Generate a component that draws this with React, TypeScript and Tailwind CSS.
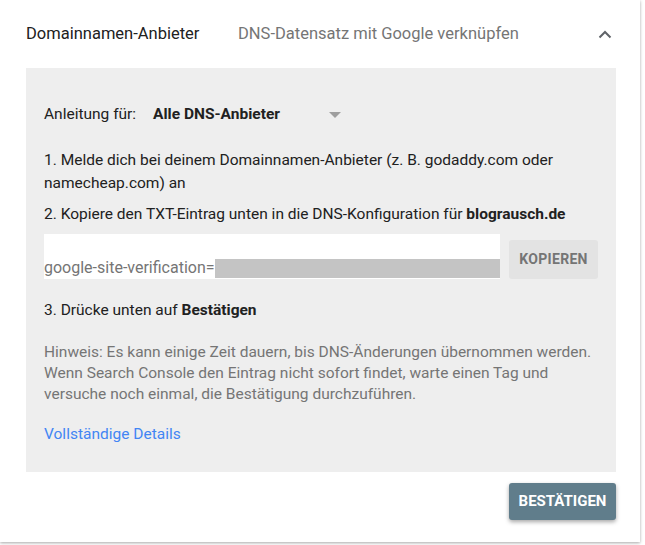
import React from "react";

export default function App() {
  return (
    <div className="w-[645px] h-[545px] bg-white" style={{ fontFamily: "Roboto, 'Liberation Sans', sans-serif" }}>
      <div className="w-[640px] h-[542px] bg-white shadow-[0_1px_3px_rgba(0,0,0,0.35)] flex flex-col">
        <div className="h-[68px] flex items-center pl-[26px] pr-[30px]">
          <div className="w-[212px] text-[16.5px] text-[#212121]">Domainnamen-Anbieter</div>
          <div className="flex-1 text-[16.5px] text-[#757575]">DNS-Datensatz mit Google verknüpfen</div>
          <svg width="14" height="9" viewBox="0 0 14 9" className="mr-[-2px]">
            <path d="M1.5 7.5 L7 2 L12.5 7.5" fill="none" stroke="#5f6368" strokeWidth="2" />
          </svg>
        </div>
        <div className="mx-[26px] w-[590px] h-[404px] bg-[#eeeeee] px-[18px] pt-[35px] text-[15.5px] text-[#212121]">
          <div className="flex items-center h-[24px]">
            <span>Anleitung für:</span>
            <span className="ml-[17px] font-bold w-[170px]">Alle DNS-Anbieter</span>
            <svg width="12" height="6" viewBox="0 0 12 6" className="ml-[6px]">
              <path d="M0 0 L12 0 L6 6 Z" fill="#9e9e9e" />
            </svg>
          </div>
          <div className="mt-[22px] leading-[23px]">
            1. Melde dich bei deinem Domainnamen-Anbieter (z. B. godaddy.com oder namecheap.com) an
          </div>
          <div className="mt-[8px] leading-[23px]">
            2. Kopiere den TXT-Eintrag unten in die DNS-Konfiguration für <b>blograusch.de</b>
          </div>
          <div className="mt-[8px] flex items-end">
            <div className="w-[457px] h-[45px] bg-white flex items-end">
              <span className="text-[#757575] text-[16px] leading-[20px] mb-[1px]">google-site-verification=</span>
              <div className="flex-1 h-[19px] bg-[#c4c4c4] mb-[1px]"></div>
            </div>
            <button className="ml-[9px] w-[89px] h-[39px] rounded-[3px] bg-[#e3e3e3] text-[#757575] text-[14px] font-bold tracking-[0.3px]">
              KOPIEREN
            </button>
          </div>
          <div className="mt-[20px] leading-[23px]">
            3. Drücke unten auf <b>Bestätigen</b>
          </div>
          <div className="mt-[20px] leading-[21px] text-[#757575]">
            Hinweis: Es kann einige Zeit dauern, bis DNS-Änderungen übernommen werden. Wenn Search Console den Eintrag nicht sofort findet, warte einen Tag und versuche noch einmal, die Bestätigung durchzuführen.
          </div>
          <div className="mt-[19px] leading-[21px] text-[#4285f4]">Vollständige Details</div>
        </div>
        <div className="flex justify-end pr-[24px] pt-[11px]">
          <button className="w-[107px] h-[37px] rounded-[3px] bg-[#607d8b] text-white text-[15px] font-bold shadow-[0_2px_4px_rgba(0,0,0,0.35)]">
            BESTÄTIGEN
          </button>
        </div>
      </div>
    </div>
  );
}
